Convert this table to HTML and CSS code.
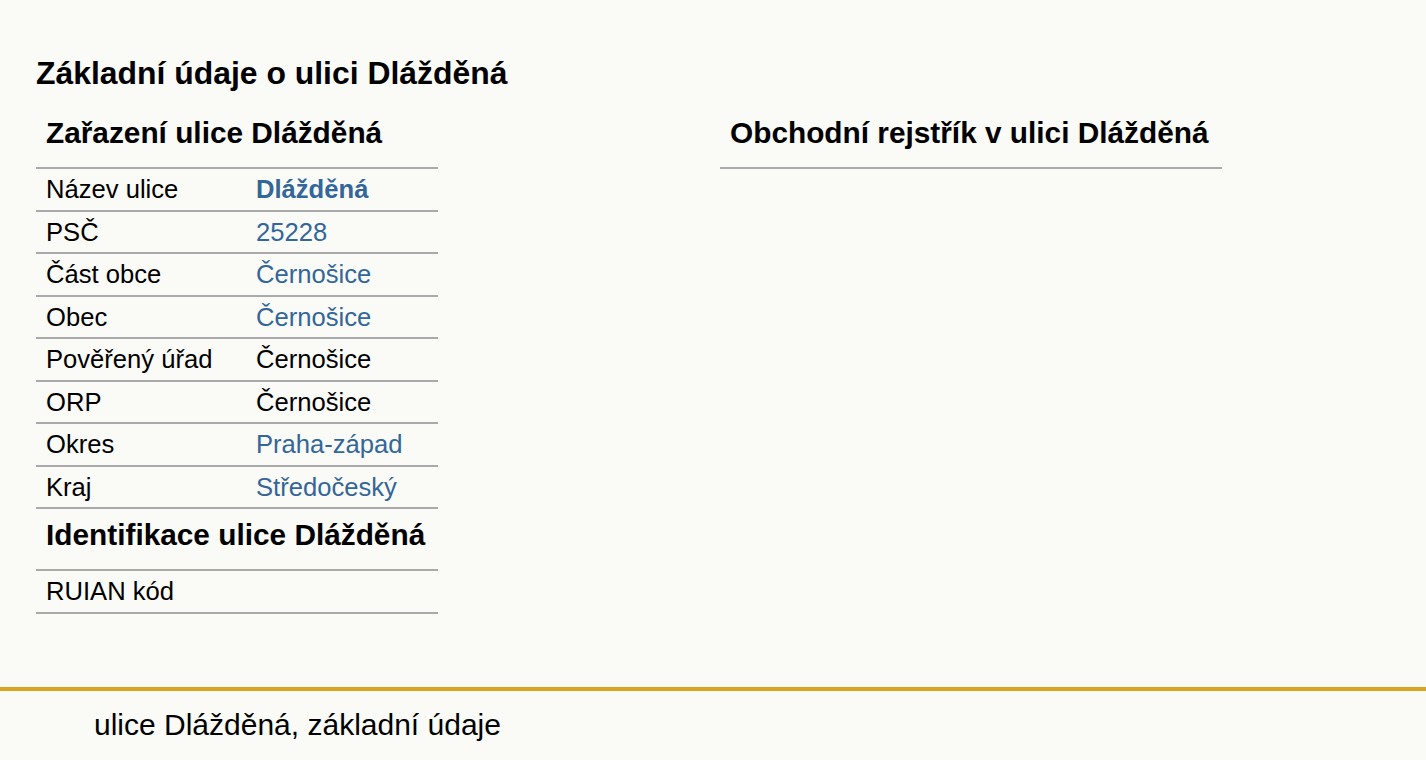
FILE: index.html
```html
<!DOCTYPE html>
<html lang="cs">
<head>
<meta charset="utf-8">
<title>ulice Dlážděná, základní údaje</title>
<link rel="stylesheet" href="styles.css">
</head>
<body>
<main class="page">
  <h1 class="title">Základní údaje o ulici Dlážděná</h1>
  <div class="columns">
    <section class="col">
      <h2 class="sec-head">Zařazení ulice Dlážděná</h2>
      <table class="info">
        <tr><td class="lbl">Název ulice</td><td><a class="strong" href="#">Dlážděná</a></td></tr>
        <tr><td class="lbl">PSČ</td><td><a href="#">25228</a></td></tr>
        <tr><td class="lbl">Část obce</td><td><a href="#">Černošice</a></td></tr>
        <tr><td class="lbl">Obec</td><td><a href="#">Černošice</a></td></tr>
        <tr><td class="lbl">Pověřený úřad</td><td>Černošice</td></tr>
        <tr><td class="lbl">ORP</td><td>Černošice</td></tr>
        <tr><td class="lbl">Okres</td><td><a href="#">Praha-západ</a></td></tr>
        <tr><td class="lbl">Kraj</td><td><a href="#">Středočeský</a></td></tr>
      </table>
      <h2 class="sec-head sec-head--next">Identifikace ulice Dlážděná</h2>
      <table class="info">
        <tr><td class="lbl">RUIAN kód</td><td></td></tr>
      </table>
    </section>
    <section class="col col--wide">
      <h2 class="sec-head">Obchodní rejstřík v ulici Dlážděná</h2>
    </section>
  </div>
</main>
<footer class="foot">
  <p class="foot-text">ulice Dlážděná, základní údaje</p>
</footer>
</body>
</html>
```
FILE: styles.css
```css
html, body {
  margin: 0;
  padding: 0;
  background: #fafaf7;
  color: #000;
  font-family: "Liberation Sans", Arial, sans-serif;
}

.page {
  padding: 55px 36px 73px;
}

.title {
  margin: 0 0 23px;
  font-size: 31.9px;
  line-height: 37px;
  font-weight: bold;
}

.columns {
  display: grid;
  grid-template-columns: 402px 502px;
  column-gap: 282px;
  align-items: start;
}

.sec-head {
  margin: 0;
  padding: 0 10px 16px;
  font-size: 29.8px;
  line-height: 36px;
  font-weight: bold;
  border-bottom: 2px solid #aaa;
}

.sec-head--next {
  padding-top: 8px;
  padding-bottom: 16px;
}

.info {
  width: 100%;
  border-collapse: collapse;
  font-size: 25.6px;
}

.info td {
  padding: 5px 10px 5.5px;
  line-height: 30px;
  border-bottom: 2px solid #aaa;
  vertical-align: top;
}

.info .lbl {
  width: 190px;
}

.info a {
  color: #336699;
  text-decoration: none;
}

.info a.strong {
  font-weight: bold;
}

.foot {
  border-top: 4px solid #daa520;
  padding: 17px 94px 0;
}

.foot-text {
  margin: 0;
  font-size: 30px;
  line-height: 34px;
}
```
